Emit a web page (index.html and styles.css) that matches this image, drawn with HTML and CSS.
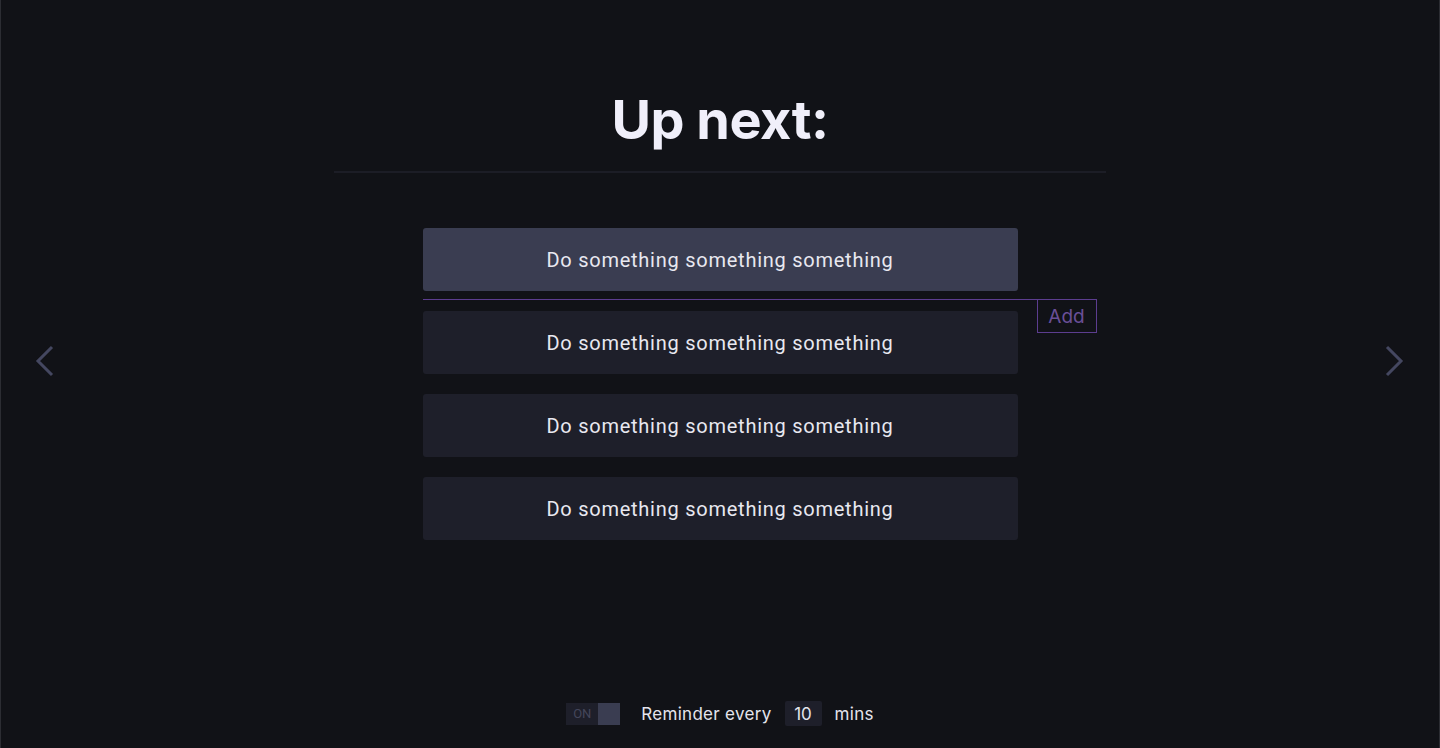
FILE: index.html
```html
<!DOCTYPE html>
<html>
<head>
<meta charset="utf-8">
<link rel="stylesheet" href="styles.css">
</head>
<body>
<div class="page">
  <button class="nav nav-left" aria-label="Previous">
    <svg width="20" height="32" viewBox="0 0 20 32"><path d="M17 2 L3 16 L17 30" fill="none" stroke="#444760" stroke-width="3"/></svg>
  </button>
  <main class="center">
    <h1 class="title">Up next:</h1>
    <div class="rule"></div>
    <div class="list">
      <div class="item item-active">Do something something something</div>
      <div class="add-row">
        <div class="add-line"></div>
        <button class="add-btn">Add</button>
      </div>
      <div class="item">Do something something something</div>
      <div class="item">Do something something something</div>
      <div class="item">Do something something something</div>
    </div>
  </main>
  <button class="nav nav-right" aria-label="Next">
    <svg width="20" height="32" viewBox="0 0 20 32"><path d="M3 2 L17 16 L3 30" fill="none" stroke="#444760" stroke-width="3"/></svg>
  </button>
  <footer class="footer">
    <div class="toggle"><span class="toggle-label">ON</span><span class="toggle-knob"></span></div>
    <span class="footer-text">Reminder every</span>
    <span class="num">10</span>
    <span class="footer-text">mins</span>
  </footer>
</div>
</body>
</html>
```
FILE: styles.css
```css
html, body {
  margin: 0;
  padding: 0;
  background: #111217;
}
body {
  font-family: Roboto, "Liberation Sans", sans-serif;
  color: #e8e8f0;
}
.page {
  position: relative;
  width: 1440px;
  height: 748px;
  box-sizing: border-box;
  box-shadow: inset 1px 0 0 #2c2d33, inset -1px 0 0 #2c2d33;
  display: flex;
  flex-direction: column;
  align-items: center;
  overflow: hidden;
}
.center {
  display: flex;
  flex-direction: column;
  align-items: center;
  padding-top: 83px;
}
.title {
  margin: 0;
  font-family: Inter, "Liberation Sans", sans-serif;
  font-weight: 700;
  font-size: 54px;
  line-height: 74px;
  letter-spacing: -0.5px;
  color: #f0effa;
}
.rule {
  width: 772px;
  height: 2px;
  background: #1c1d26;
  margin-top: 14px;
}
.list {
  margin-top: 55px;
  width: 595px;
  display: flex;
  flex-direction: column;
}
.item {
  width: 595px;
  height: 63px;
  box-sizing: border-box;
  background: #1e1f2a;
  border-radius: 3px;
  display: flex;
  align-items: center;
  justify-content: center;
  font-size: 20px;
  letter-spacing: 0.75px;
  color: #e8e8f0;
  margin-bottom: 20px;
  padding-top: 1px;
}
.item-active {
  background: #3a3d51;
  margin-bottom: 8px;
}
.add-row {
  position: relative;
  width: 674px;
  height: 2px;
  margin-bottom: 10px;
}
.add-line {
  width: 674px;
  height: 1px;
  background: #5c3d8f;
}
.add-btn {
  position: absolute;
  right: 0;
  top: 0;
  width: 60px;
  height: 34px;
  box-sizing: border-box;
  border: 1px solid #5c3d8f;
  background: transparent;
  color: #6a4f98;
  font-family: Inter, "Liberation Sans", sans-serif;
  font-size: 19px;
  padding: 0;
}
.nav {
  position: absolute;
  top: 345px;
  background: none;
  border: 0;
  padding: 0;
  width: 20px;
  height: 32px;
}
.nav-left { left: 35px; }
.nav-right { right: 36px; }
.footer {
  position: absolute;
  bottom: 22px;
  left: 0;
  right: 0;
  display: flex;
  justify-content: center;
  align-items: center;
  font-family: Inter, "Liberation Sans", sans-serif;
  font-size: 17px;
  color: #e4e4ec;
}
.toggle {
  display: flex;
  height: 22px;
  margin-right: 21px;
}
.toggle-label {
  width: 32px;
  background: #1e1f2a;
  color: #44465a;
  font-size: 13px;
  display: flex;
  align-items: center;
  justify-content: center;
  font-family: Roboto, sans-serif;
}
.toggle-knob {
  width: 22px;
  background: #3a3d51;
}
.footer-text {
  line-height: 24px;
  letter-spacing: 0.3px;
}
.num {
  width: 37px;
  height: 25px;
  background: #1e1f2a;
  border-radius: 2px;
  display: flex;
  align-items: center;
  justify-content: center;
  margin: 0 13px;
  font-size: 17px;
}
```
